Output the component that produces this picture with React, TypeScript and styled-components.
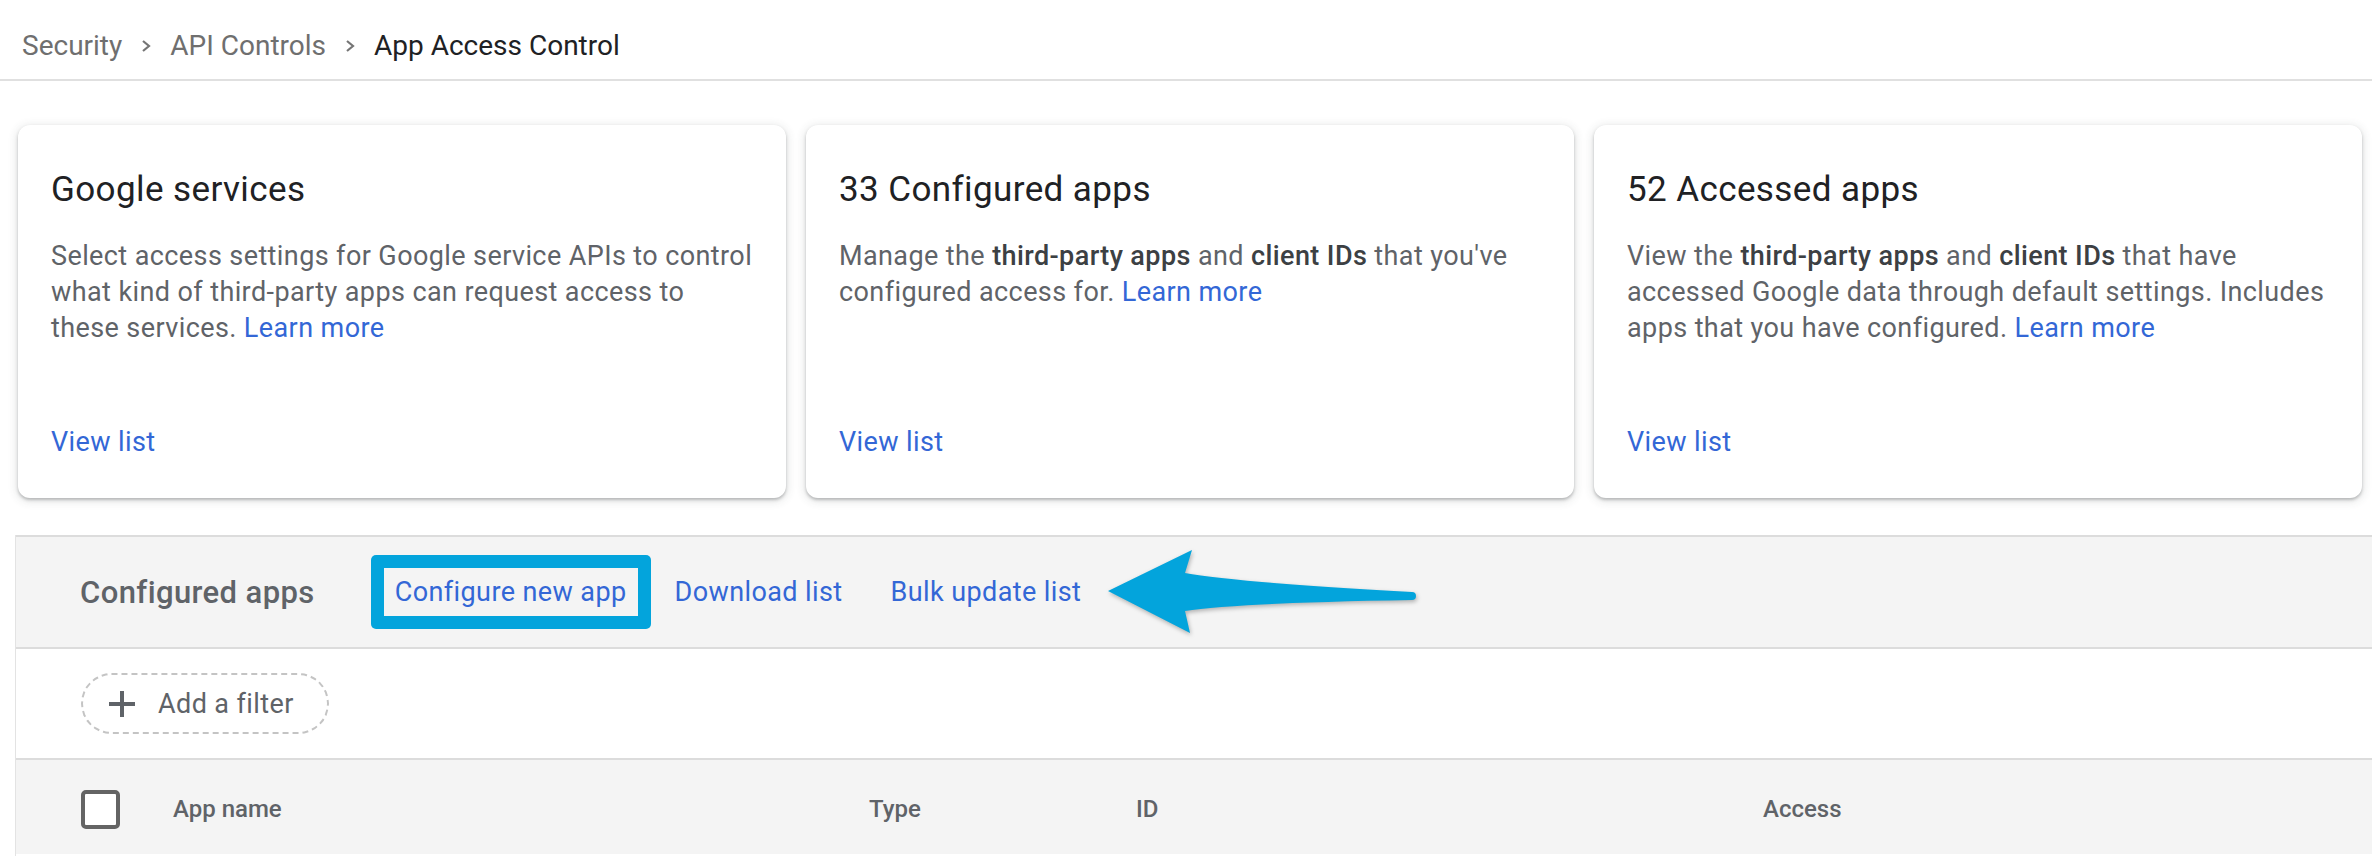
import styled, { createGlobalStyle } from "styled-components";

const GlobalStyle = createGlobalStyle`
  html, body {
    margin: 0;
    padding: 0;
    background: #ffffff;
  }
  body {
    font-family: Roboto, "Noto Sans", Arial, sans-serif;
    overflow: hidden;
  }
  * {
    box-sizing: border-box;
  }
`;

const Page = styled.div`
  width: 2372px;
  height: 856px;
  overflow: hidden;
  display: flex;
  flex-direction: column;
`;

const Breadcrumbs = styled.nav`
  height: 81px;
  padding: 12px 0 0 22px;
  display: flex;
  align-items: center;
  gap: 19px;
  border-bottom: 2px solid #e0e0e0;
  font-size: 28px;
`;

const Crumb = styled.span<{ $current?: boolean }>`
  color: ${({ $current }) => ($current ? "#202124" : "#6f6f6f")};
`;

const CardRow = styled.section`
  display: grid;
  grid-template-columns: repeat(3, 768px);
  gap: 20px;
  padding-left: 18px;
  margin-top: 44px;
`;

const Card = styled.article`
  height: 373px;
  border-radius: 12px;
  background: #ffffff;
  box-shadow: 0 2px 3px rgba(60, 64, 67, 0.3), 0 2px 8px 2px rgba(60, 64, 67, 0.12);
  display: flex;
  flex-direction: column;
  padding: 43px 16px 0 33px;
`;

const CardTitle = styled.h2`
  margin: 0;
  font-size: 35px;
  line-height: 44px;
  letter-spacing: 0.4px;
  font-weight: 400;
  color: #202124;
`;

const CardText = styled.p`
  margin: 26px 0 0;
  font-size: 27px;
  line-height: 36px;
  letter-spacing: 0.4px;
  color: #5f6368;
`;

const Strong = styled.b`
  font-weight: 500;
  color: #3c4043;
`;

const Link = styled.a`
  color: #3367d6;
  text-decoration: none;
  cursor: pointer;
`;

const ViewList = styled(Link)`
  margin-top: auto;
  margin-bottom: 38px;
  font-size: 27px;
  line-height: 36px;
  letter-spacing: 0.4px;
`;

const Panel = styled.section`
  margin: 37px 0 0 15px;
  border-left: 1px solid #e3e3e3;
  flex: 1;
`;

const Toolbar = styled.div`
  height: 112px;
  border-top: 2px solid #dcdcdc;
  background: #f4f4f4;
  padding-left: 64px;
  display: flex;
  align-items: center;
`;

const ToolbarLabel = styled.h3`
  margin: 0 56px 0 0;
  font-size: 31px;
  font-weight: 500;
  letter-spacing: 0.4px;
  color: #5f6368;
`;

const ToolbarLink = styled(Link)<{ $highlight?: boolean }>`
  height: 74px;
  padding: 0 24px;
  display: flex;
  align-items: center;
  font-size: 27px;
  letter-spacing: 0.4px;
  border-radius: 5px;
  box-shadow: ${({ $highlight }) => ($highlight ? "inset 0 0 0 13px #03a4dc" : "none")};
`;

const FilterRow = styled.div`
  height: 111px;
  border-top: 2px solid #dcdcdc;
  background: #ffffff;
  padding-left: 65px;
  display: flex;
  align-items: center;
`;

const FilterChip = styled.button`
  height: 61px;
  padding: 0 33px 0 25px;
  border: 2px dashed #c4c4c4;
  border-radius: 31px;
  background: transparent;
  display: flex;
  align-items: center;
  gap: 22px;
  font-family: inherit;
  font-size: 27px;
  letter-spacing: 0.4px;
  color: #5f6368;
  cursor: pointer;
`;

const HeaderRow = styled.div`
  height: 96px;
  border-top: 2px solid #dcdcdc;
  background: #f4f4f4;
  padding: 4px 0 0 65px;
  display: grid;
  grid-template-columns: 92px 696px 267px 627px 1fr;
  align-items: center;
`;

const Checkbox = styled.span`
  width: 39px;
  height: 39px;
  border: 4px solid #646464;
  border-radius: 5px;
  background: #ffffff;
`;

const HeaderCell = styled.span`
  font-size: 24px;
  font-weight: 500;
  color: #5f6368;
`;

const Arrow = styled.svg`
  flex: none;
  margin-left: -2px;
  filter: drop-shadow(1px 2px 2px rgba(0, 0, 0, 0.28));
`;

function Chevron() {
  return (
    <svg width="10" height="14" viewBox="0 0 10 14">
      <polyline points="2,2 8,7 2,12" fill="none" stroke="#757575" strokeWidth="2.2" />
    </svg>
  );
}

function PlusIcon() {
  return (
    <svg width="28" height="28" viewBox="0 0 28 28">
      <path d="M14 1v26M1 14h26" stroke="#5f6368" strokeWidth="4" />
    </svg>
  );
}

export default function App() {
  return (
    <Page>
      <GlobalStyle />
      <Breadcrumbs>
        <Crumb>Security</Crumb>
        <Chevron />
        <Crumb>API Controls</Crumb>
        <Chevron />
        <Crumb $current>App Access Control</Crumb>
      </Breadcrumbs>

      <CardRow>
        <Card>
          <CardTitle>Google services</CardTitle>
          <CardText>
            Select access settings for Google service APIs to control
            <br />
            what kind of third-party apps can request access to
            <br />
            these services. <Link>Learn more</Link>
          </CardText>
          <ViewList>View list</ViewList>
        </Card>
        <Card>
          <CardTitle>33 Configured apps</CardTitle>
          <CardText>
            Manage the <Strong>third-party apps</Strong> and <Strong>client IDs</Strong> that you've
            <br />
            configured access for. <Link>Learn more</Link>
          </CardText>
          <ViewList>View list</ViewList>
        </Card>
        <Card>
          <CardTitle>52 Accessed apps</CardTitle>
          <CardText>
            View the <Strong>third-party apps</Strong> and <Strong>client IDs</Strong> that have
            <br />
            accessed Google data through default settings. Includes
            <br />
            apps that you have configured. <Link>Learn more</Link>
          </CardText>
          <ViewList>View list</ViewList>
        </Card>
      </CardRow>

      <Panel>
        <Toolbar>
          <ToolbarLabel>Configured apps</ToolbarLabel>
          <ToolbarLink $highlight>Configure new app</ToolbarLink>
          <ToolbarLink>Download list</ToolbarLink>
          <ToolbarLink>Bulk update list</ToolbarLink>
          <Arrow width="315" height="95" viewBox="0 0 315 95">
            <path
              d="M5 46 L89 5 L82 28 Q130 37 309 47 A4 4 0 0 1 309 55 Q130 58 82 66 L87 88 Z"
              fill="#03a4dc"
            />
          </Arrow>
        </Toolbar>

        <FilterRow>
          <FilterChip>
            <PlusIcon />
            Add a filter
          </FilterChip>
        </FilterRow>

        <HeaderRow>
          <Checkbox />
          <HeaderCell>App name</HeaderCell>
          <HeaderCell>Type</HeaderCell>
          <HeaderCell>ID</HeaderCell>
          <HeaderCell>Access</HeaderCell>
        </HeaderRow>
      </Panel>
    </Page>
  );
}
